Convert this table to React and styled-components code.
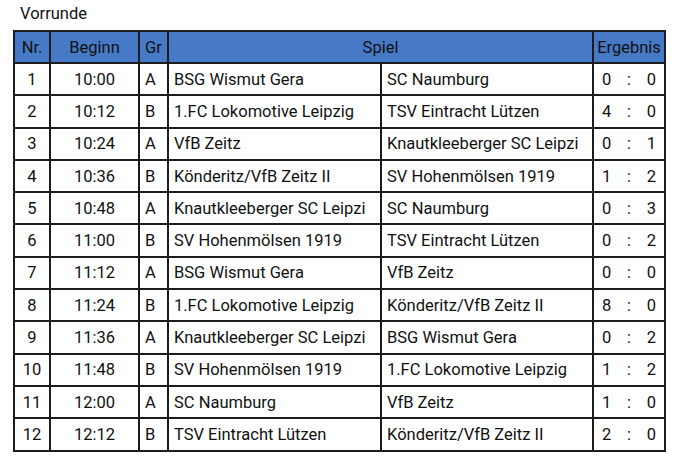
import { createGlobalStyle, styled } from "styled-components";

const games = [
    [1, "10:00", "A", "BSG Wismut Gera", "SC Naumburg", 0, 0],
    [2, "10:12", "B", "1.FC Lokomotive Leipzig", "TSV Eintracht Lützen", 4, 0],
    [3, "10:24", "A", "VfB Zeitz", "Knautkleeberger SC Leipzi", 0, 1],
    [4, "10:36", "B", "Könderitz/VfB Zeitz II", "SV Hohenmölsen 1919", 1, 2],
    [5, "10:48", "A", "Knautkleeberger SC Leipzi", "SC Naumburg", 0, 3],
    [6, "11:00", "B", "SV Hohenmölsen 1919", "TSV Eintracht Lützen", 0, 2],
    [7, "11:12", "A", "BSG Wismut Gera", "VfB Zeitz", 0, 0],
    [8, "11:24", "B", "1.FC Lokomotive Leipzig", "Könderitz/VfB Zeitz II", 8, 0],
    [9, "11:36", "A", "Knautkleeberger SC Leipzi", "BSG Wismut Gera", 0, 2],
    [10, "11:48", "B", "SV Hohenmölsen 1919", "1.FC Lokomotive Leipzig", 1, 2],
    [11, "12:00", "A", "SC Naumburg", "VfB Zeitz", 1, 0],
    [12, "12:12", "B", "TSV Eintracht Lützen", "Könderitz/VfB Zeitz II", 2, 0],
];

const App = () => {
    return (
        <Page>
            <GlobalStyle />
            <Title>Vorrunde</Title>
            <Table>
                <colgroup>
                    <col style={{ width: 36 }} />
                    <col style={{ width: 89 }} />
                    <col style={{ width: 29 }} />
                    <col style={{ width: 213 }} />
                    <col style={{ width: 212 }} />
                    <col style={{ width: 72 }} />
                </colgroup>
                <thead>
                    <tr>
                        <Head>Nr.</Head>
                        <Head>Beginn</Head>
                        <Head>Gr</Head>
                        <Head colSpan={2}>Spiel</Head>
                        <Head>Ergebnis</Head>
                    </tr>
                </thead>
                <tbody>
                    {games.map(([nr, time, group, home, away, a, b]) => (
                        <Row key={nr}>
                            <Cell $align="center">{nr}</Cell>
                            <Cell $align="center">{time}</Cell>
                            <Cell>{group}</Cell>
                            <Cell>{home}</Cell>
                            <Cell>{away}</Cell>
                            <Cell>
                                <Score>
                                    <span>{a}</span>
                                    <span>:</span>
                                    <span>{b}</span>
                                </Score>
                            </Cell>
                        </Row>
                    ))}
                </tbody>
            </Table>
        </Page>
    );
}

export default App;

//styled
const GlobalStyle = createGlobalStyle`
    body {
        margin: 0;
        background: #fff;
        font-family: Roboto, "Liberation Sans", sans-serif;
        color: #111;
    }
`;

const Page = styled.div`
    padding: 4px 0 0 13px;
`;

const Title = styled.div`
    font-size: 16.5px;
    line-height: 20px;
    padding-left: 7px;
    margin-bottom: 6px;
`;

const Table = styled.table`
    table-layout: fixed;
    border-collapse: collapse;
    width: 651px;
    font-size: 16.5px;
`;

const Head = styled.th`
    height: 30px;
    padding: 0;
    background-color: #4679c6;
    border: 2px solid #1c1c1c;
    font-weight: normal;
    text-align: center;
    white-space: nowrap;
    overflow: hidden;
`;

const Row = styled.tr`
    height: 32.3px;
`;

const Cell = styled.td`
    padding: 0 5px;
    border: 2px solid #1c1c1c;
    text-align: ${(p) => p.$align || "left"};
    white-space: nowrap;
    overflow: hidden;
`;

const Score = styled.div`
    display: flex;
    justify-content: space-between;
    padding: 0 3px;
`;
